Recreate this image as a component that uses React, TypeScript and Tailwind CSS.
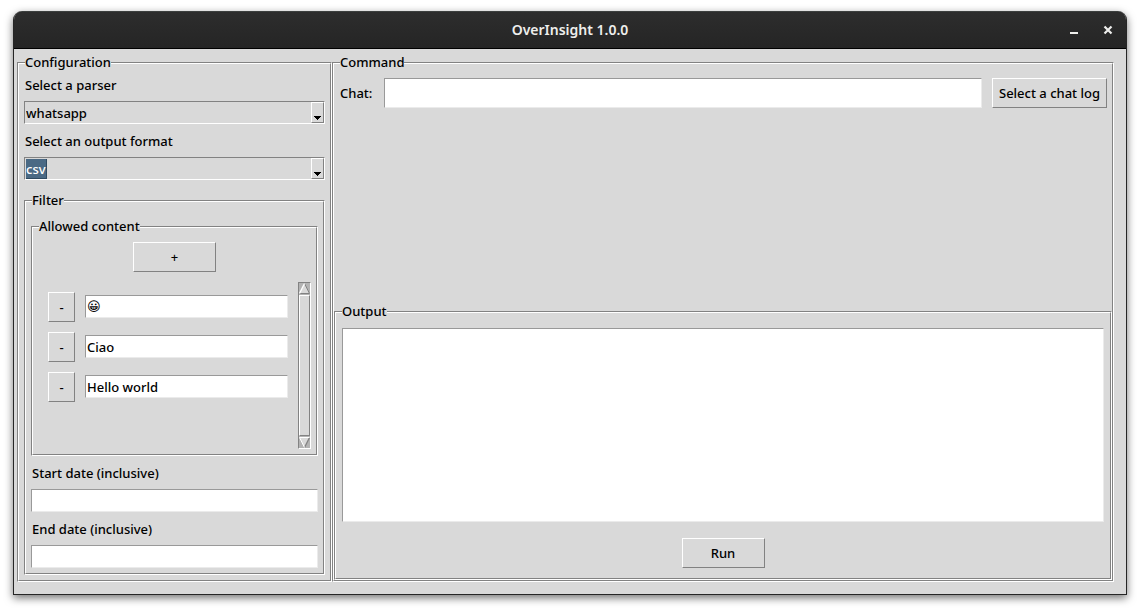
import { useState, type ReactNode } from "react";

const SUNKEN = "border border-t-[#828282] border-l-[#828282] border-b-white border-r-white";
const RAISED = "border border-t-white border-l-white border-b-[#828282] border-r-[#828282]";
const ENTRY =
  "block border border-t-[#999999] border-l-[#999999] border-b-[#ebebeb] border-r-[#ebebeb] bg-white outline-none";
const BUTTON = `${RAISED} h-[30px] shrink-0 bg-[#d9d9d9] leading-5 active:bg-[#ececec]`;

const isEmoji = (text: string) => /^\p{Extended_Pictographic}+$/u.test(text);

function Frame({ title, className = "", children }: { title: string; className?: string; children: ReactNode }) {
  return (
    <section className={`mt-2.5 flex flex-col ${SUNKEN} ${className}`}>
      <div className={`flex flex-1 flex-col ${RAISED}`}>
        <h2 className="-mt-3 ml-1.5 self-start bg-[#d9d9d9] leading-5">{title}</h2>
        {children}
      </div>
    </section>
  );
}

function Combo({
  id,
  label,
  options,
  selected = false,
}: {
  id: string;
  label: string;
  options: string[];
  selected?: boolean;
}) {
  return (
    <div className="flex flex-col">
      <label htmlFor={id} className="ml-px leading-5">
        {label}
      </label>
      <div className={`mt-1.5 flex h-[23px] shrink-0 ${SUNKEN} relative`}>
        <select
          id={id}
          className={
            selected
              ? "w-full appearance-none bg-[linear-gradient(#4a6984,#4a6984),linear-gradient(#2f4a61,#2f4a61)] bg-[length:20px_19px,21px_20px] bg-[position:1px_1px] bg-no-repeat pl-px leading-5 text-white outline-none"
              : "w-full appearance-none bg-transparent pl-px leading-5 outline-none"
          }
        >
          {options.map((o) => (
            <option key={o} className="text-black">
              {o}
            </option>
          ))}
        </select>
        <span
          className={`pointer-events-none absolute top-0 right-0 flex h-[21px] w-[13px] items-end justify-center bg-[#d9d9d9] pb-0.5 ${RAISED}`}
        >
          <svg width="7" height="4" viewBox="0 0 7 4" shapeRendering="crispEdges" aria-hidden="true">
            <path d="M0 0h7v1h-1v1h-1v1h-1v1h-1v-1h-1v-1h-1v-1h-1z" fill="#000" />
          </svg>
        </span>
      </div>
    </div>
  );
}

function DateField({ id, label }: { id: string; label: string }) {
  return (
    <>
      <label htmlFor={id} className="mt-[7px] ml-px leading-5">
        {label}
      </label>
      <input id={id} type="text" className={`${ENTRY} mt-1.5 h-[23px] shrink-0 px-px`} />
    </>
  );
}

function Scrollbar() {
  return (
    <div className={`flex w-[13px] flex-col bg-[#b3b3b3] ${SUNKEN}`}>
      <svg width="11" height="12" viewBox="0 0 11 12" aria-hidden="true">
        <path d="M5.5 0.5L10.5 10.5H0.5z" fill="#d9d9d9" />
        <path d="M5.5 0.5L10.5 10.5H0.5" fill="none" stroke="#828282" />
        <path d="M0.5 10.5L5.5 0.5" stroke="#fff" strokeWidth="1.3" />
      </svg>
      <div className={`flex-1 bg-[#d9d9d9] ${RAISED}`} />
      <svg width="11" height="12" viewBox="0 0 11 12" aria-hidden="true">
        <path d="M0.5 1.5H10.5L5.5 11.5z" fill="#d9d9d9" />
        <path d="M10.5 1.5L5.5 11.5" stroke="#828282" strokeWidth="1.3" />
        <path d="M10.5 1.5H0.5L5.5 11.5" fill="none" stroke="#fff" />
      </svg>
    </div>
  );
}

export default function App() {
  const [filters, setFilters] = useState(["😀", "Ciao", "Hello world"]);

  return (
    <div className="flex min-h-screen flex-col bg-white px-[13px] pt-[11px] pb-4 font-['Noto_Sans','DejaVu_Sans',sans-serif] text-[13px] font-medium text-black">
      <main className="flex flex-1 flex-col overflow-hidden rounded-t-[9px] border border-t-0 border-[#262626] bg-[#d9d9d9] shadow-[0_3px_8px_rgba(0,0,0,0.55)]">
        <header className="grid h-[38px] shrink-0 grid-cols-[1fr_auto_1fr] items-center border-t border-b border-t-[#3c3f3e] border-b-black bg-linear-to-b from-[#2d2d2d] to-[#252525] text-[#eeeeec]">
          <h1 className="col-start-2 text-sm font-semibold">OverInsight 1.0.0</h1>
          <div className="flex justify-end gap-3.5 pr-2">
            <button type="button" aria-label="Minimize" className="flex size-5 items-center justify-center">
              <svg width="10" height="10" viewBox="0 0 10 10">
                <path d="M1 7h8v2h-8z" fill="currentColor" />
              </svg>
            </button>
            <button type="button" aria-label="Close" className="flex size-5 items-center justify-center">
              <svg width="10" height="10" viewBox="0 0 10 10">
                <path d="M1.5 1.5l7 7M8.5 1.5l-7 7" stroke="currentColor" strokeWidth="2.2" />
              </svg>
            </button>
          </div>
        </header>

        <div className="flex flex-1 pt-[3px] pr-3 pb-3 pl-[3px]">
          <Frame title="Configuration" className="w-[315px] shrink-0">
            <div className="flex flex-1 flex-col px-[5px] pt-[3px] pb-[5px]">
              <div className="mb-2.5 flex flex-col gap-[7px]">
                <Combo id="parser" label="Select a parser" options={["whatsapp"]} />
                <Combo id="format" label="Select an output format" options={["csv"]} selected />
              </div>
              <Frame title="Filter" className="flex-1">
                <div className="flex flex-1 flex-col px-[5px] pt-1.5 pb-[5px]">
                  <Frame title="Allowed content" className="flex-1">
                    <div className="flex flex-1 flex-col pt-1.5 pr-[5px] pb-[5px]">
                      <button
                        type="button"
                        className={`${BUTTON} ml-[5px] w-[83px] self-center`}
                        onClick={() => setFilters([...filters, ""])}
                      >
                        +
                      </button>
                      <div className="mt-2.5 flex flex-1 gap-2.5 pl-[15px]">
                        <ul className="flex flex-1 flex-col gap-2.5 pt-2.5">
                          {filters.map((value, i) => (
                            <li key={i} className="flex items-start gap-2.5">
                              <button
                                type="button"
                                aria-label={`Remove filter ${i + 1}`}
                                className={`${BUTTON} w-[27px]`}
                                onClick={() => setFilters(filters.filter((_, j) => j !== i))}
                              >
                                -
                              </button>
                              <input
                                type="text"
                                aria-label={`Filter ${i + 1}`}
                                className={`${ENTRY} mt-[3px] h-[23px] min-w-0 flex-1 px-px ${isEmoji(value) ? "font-['DejaVu_Sans',sans-serif] font-normal" : ""}`}
                                value={value}
                                onChange={(e) => setFilters(filters.map((f, j) => (j === i ? e.target.value : f)))}
                              />
                            </li>
                          ))}
                        </ul>
                        <Scrollbar />
                      </div>
                    </div>
                  </Frame>
                  <DateField id="start" label="Start date (inclusive)" />
                  <DateField id="end" label="End date (inclusive)" />
                </div>
              </Frame>
            </div>
          </Frame>

          <Frame title="Command" className="min-w-0 flex-1">
            <div className="flex flex-1 items-start pt-1.5 pr-[5px] pl-1.5">
              <label htmlFor="chat" className="w-11 leading-[30px]">
                Chat:
              </label>
              <input id="chat" type="text" className={`${ENTRY} h-[30px] min-w-0 flex-1 px-px`} />
              <button type="button" className={`${BUTTON} ml-2.5 w-[115px]`}>
                Select a chat log
              </button>
            </div>
            <Frame title="Output">
              <textarea
                aria-label="Output"
                className={`${ENTRY} mx-1.5 mt-[7px] h-[194px] resize-none p-px`}
              />
              <button type="button" className={`${BUTTON} mt-4 mb-2.5 w-[83px] self-center`}>
                Run
              </button>
            </Frame>
          </Frame>
        </div>
      </main>
    </div>
  );
}
